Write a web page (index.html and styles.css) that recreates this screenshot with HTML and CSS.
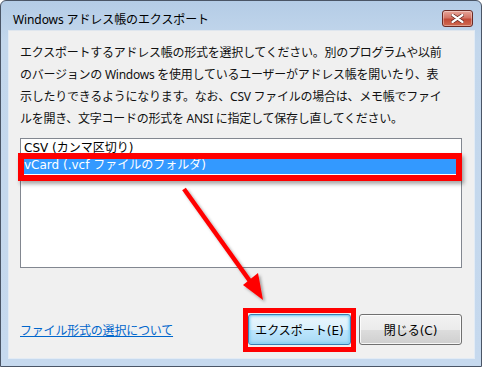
FILE: index.html
```html
<!DOCTYPE html>
<html lang="ja">
<head>
  <meta charset="UTF-8" />
  <title>Windows アドレス帳のエクスポート</title>
  <link rel="stylesheet" href="styles.css">
</head>
<body>
  <div class="window">
    <div class="titlebar">
      <span class="title">Windows アドレス帳のエクスポート</span>
      <button class="close-x" aria-label="閉じる">
        <svg width="13" height="9" viewBox="0 0 13 9">
          <path d="M1.5 1 L11.5 8 M11.5 1 L1.5 8" stroke="#5a1a14" stroke-width="3.6" stroke-linecap="round"/>
          <path d="M1.5 1 L11.5 8 M11.5 1 L1.5 8" stroke="#fff" stroke-width="2.2" stroke-linecap="round"/>
        </svg>
      </button>
    </div>

    <div class="panel">
      <p class="intro">エクスポートするアドレス帳の形式を選択してください。別のプログラムや以前<br>のバージョンの Windows を使用しているユーザーがアドレス帳を開いたり、表<br>示したりできるようになります。なお、CSV ファイルの場合は、メモ帳でファイ<br>ルを開き、文字コードの形式を ANSI に指定して保存し直してください。</p>

      <div class="listbox">
        <div class="item">CSV (カンマ区切り)</div>
        <div class="item selected">vCard (.vcf ファイルのフォルダ)</div>
        <div class="mark mark-item"></div>
      </div>

      <div class="footer">
        <a href="#" class="help-link">ファイル形式の選択について</a>
        <div class="buttons">
          <div class="btn-wrap">
            <button class="btn default">エクスポート(E)</button>
            <div class="mark mark-btn"></div>
          </div>
          <button class="btn">閉じる(C)</button>
        </div>
      </div>
    </div>

    <svg class="arrow" width="482" height="367" viewBox="0 0 482 367">
      <defs>
        <filter id="shadow" x="-20%" y="-20%" width="140%" height="140%">
          <feDropShadow dx="2" dy="2" stdDeviation="1.6" flood-color="#000" flood-opacity="0.35"/>
        </filter>
      </defs>
      <g filter="url(#shadow)">
        <line x1="184" y1="189" x2="252" y2="284" stroke="#ff0000" stroke-width="4.5"/>
        <polygon points="263,300 243,285 258,273" fill="#ff0000"/>
      </g>
    </svg>
  </div>
</body>
</html>
```

FILE: styles.css
```css
* {
  box-sizing: border-box;
  margin: 0;
  padding: 0;
}

body {
  width: 482px;
  height: 367px;
  overflow: hidden;
  background: #fff;
  font-family: "Noto Sans", "Noto Sans CJK JP", sans-serif;
  font-size: 12px;
  color: #000;
}

.window {
  position: relative;
  width: 482px;
  height: 367px;
  border: 1px solid #4a5566;
  border-radius: 6px 6px 0 0;
  background: linear-gradient(to bottom, #b4cce6 0, #c3d7ec 40px, #c6d9ee 100%);
  padding: 0 6px 7px 7px;
  display: flex;
  flex-direction: column;
}

.titlebar {
  height: 29px;
  display: flex;
  align-items: center;
  justify-content: space-between;
  padding: 0 2px 0 5px;
}

.title {
  font-size: 12px;
  letter-spacing: -0.1px;
  margin-top: 6px;
}

.close-x {
  width: 31px;
  height: 17px;
  margin-top: 5px;
  border: 1px solid #6b2a24;
  border-radius: 3px;
  background: linear-gradient(to bottom, #e8a69a 0, #d47566 45%, #c24a37 55%, #d06a50 100%);
  box-shadow: inset 0 0 0 1px rgba(255, 255, 255, 0.35);
  display: flex;
  align-items: center;
  justify-content: center;
}

.panel {
  flex: 1;
  background: #f0f0f0;
  border: 1px solid #e2ebf5;
  border-top-color: #dfe6ee;
  padding: 11px 12px 0 11px;
  display: flex;
  flex-direction: column;
}

.intro {
  line-height: 22px;
  letter-spacing: -0.25px;
  white-space: nowrap;
  color: #111;
}

.listbox {
  position: relative;
  margin-top: 8px;
  height: 130px;
  border: 1px solid #828790;
  background: #fff;
  padding-top: 1px;
}

.item {
  height: 17px;
  line-height: 17px;
  padding-left: 3px;
  font-family: "DejaVu Sans", "Noto Sans CJK JP", sans-serif;
  white-space: nowrap;
}

.item.selected {
  background: #3399ff;
  color: #fff;
}

.mark {
  position: absolute;
  border: 6px solid #ff0000;
  box-shadow: 2px 3px 4px rgba(0, 0, 0, 0.35);
}

.mark-item {
  left: -3px;
  top: 14px;
  width: 444px;
  height: 28px;
}

.footer {
  margin-top: 46px;
  display: flex;
  align-items: center;
  justify-content: space-between;
}

.help-link {
  color: #0066cc;
  text-decoration: underline;
  letter-spacing: -0.2px;
}

.buttons {
  display: flex;
  gap: 8px;
}

.btn-wrap {
  position: relative;
}

.btn {
  width: 103px;
  height: 31px;
  border: 1px solid #707070;
  border-radius: 3px;
  background: linear-gradient(to bottom, #f2f2f2 0, #ebebeb 50%, #dddddd 50%, #cfcfcf 100%);
  box-shadow: inset 0 0 0 1px rgba(255, 255, 255, 0.8);
  font-family: "DejaVu Sans", "Noto Sans CJK JP", sans-serif;
  font-size: 12px;
  color: #000;
}

.btn.default {
  border-color: #3c7fb1;
  background: linear-gradient(to bottom, #eaf6fd 0, #d9f0fc 50%, #bee6fd 50%, #a7d9f5 100%);
  box-shadow: inset 0 0 0 1px #8fd3f5, inset 0 0 3px 1px #6fc8f0;
}

.mark-btn {
  left: -5px;
  top: -6px;
  width: 113px;
  height: 44px;
  border-width: 5px;
  box-shadow: none;
}

.arrow {
  position: absolute;
  left: -1px;
  top: -1px;
  pointer-events: none;
}
```
